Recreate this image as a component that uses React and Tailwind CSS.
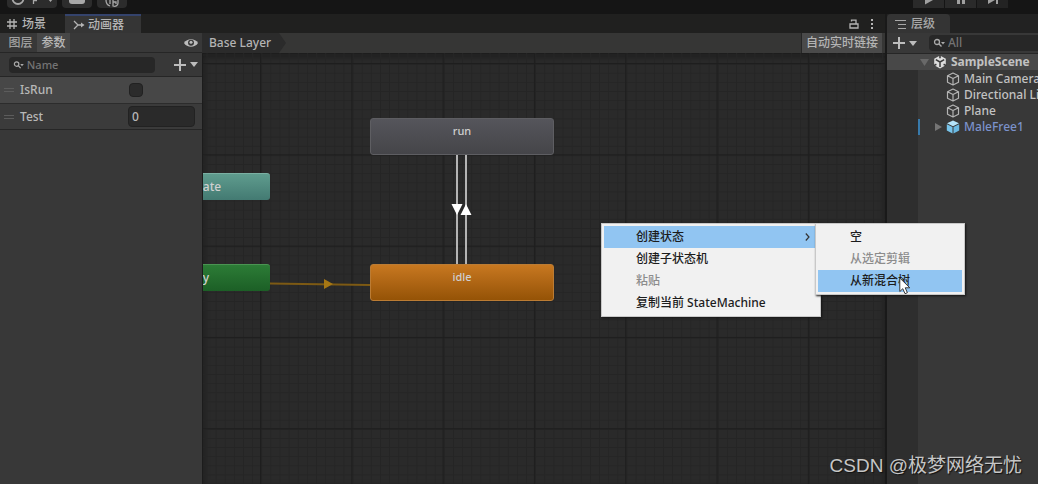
import { useState } from "react";

const MINOR = 9.13;
const MAJOR = 91.3;

const objects = [
  { name: "Main Camera" },
  { name: "Directional Light" },
  { name: "Plane" },
  { name: "MaleFree1", prefab: true },
];

function SearchIcon({ className }) {
  return (
    <svg viewBox="0 0 12 10" className={`h-[10px] w-3 ${className}`} fill="none" stroke="currentColor">
      <circle cx="4" cy="4" r="2.5" strokeWidth="1.3" />
      <path d="M6 6l2.5 2.5" strokeWidth="1.4" />
      <path d="M8 4h4L10 6.5z" fill="currentColor" stroke="none" />
    </svg>
  );
}

function AddButton({ label }) {
  return (
    <button aria-label={label} className="flex items-center gap-1 text-[#bdbdbd]">
      <svg viewBox="0 0 12 12" className="size-3" stroke="currentColor" strokeWidth="2">
        <path d="M6 0v12M0 6h12" />
      </svg>
      <svg viewBox="0 0 8 5" className="h-[5px] w-2" fill="currentColor">
        <path d="M0 0h8L4 5z" />
      </svg>
    </button>
  );
}

function CubeIcon({ filled }) {
  if (filled) {
    return (
      <svg viewBox="0 0 14 14" className="size-[14px] shrink-0">
        <path d="M7 .5l6 2.8L7 6.2 1 3.3z" fill="#b4e4fa" />
        <path d="M.8 4.2l5.7 2.7v6.6L.8 10.6z" fill="#78c4ea" />
        <path d="M13.2 4.2L7.5 6.900v6.600l5.700-2.900z" fill="#6ab9e2" />
      </svg>
    );
  }
  return (
    <svg viewBox="0 0 14 14" className="size-[14px] shrink-0" fill="none" stroke="#b4b4b4" strokeWidth="1.2" strokeLinejoin="round">
      <path d="M7 1l5.500 2.700v6.600L7 13l-5.500-2.700V3.700zM1.500 3.700L7 6.500l5.500-2.800M7 6.500V13" />
    </svg>
  );
}

function UnityIcon() {
  return (
    <svg viewBox="0 0 14 14" className="size-[14px] shrink-0">
      <path d="M7 .5l5.800 3.200v6.600L7 13.500l-5.800-3.200V3.700z" fill="#dedede" />
      <path d="M7 7V12M7 7L2.800 4.600M7 7l4.200-2.400" stroke="#3c3c3c" strokeWidth="1.500" />
      <path d="M7 0v3.200M.8 10.600l2.600-1.400M13.200 10.600l-2.600-1.400" stroke="#3c3c3c" strokeWidth="1.600" />
    </svg>
  );
}

function TopToolbar() {
  return (
    <div className="flex h-[14px] items-start justify-between overflow-hidden bg-[#151515] pr-[30px] pl-[7px]">
      <div className="flex gap-[5px] text-[#a8a8a8]">
        <button aria-label="Account" className="flex h-2 w-[50px] items-start rounded-b-sm bg-[#2c2c2c] pl-1">
          <svg viewBox="0 0 46 8" className="h-2 w-[46px]" fill="none" stroke="currentColor">
            <path d="M1.500 -1.500a5 5 0 0 0 11 0" strokeWidth="1.800" />
            <path d="M22.500 0v4M22 .5h4" strokeWidth="1.300" />
            <path d="M37 -1h5L39.500 2z" fill="currentColor" stroke="none" />
          </svg>
        </button>
        <button aria-label="Cloud" className="flex h-2 w-[30px] items-start justify-center rounded-b-sm bg-[#2c2c2c]">
          <svg viewBox="0 0 16 4" className="h-1 w-4" fill="currentColor">
            <path d="M0 0h16v1a3 3 0 0 1-3 3H3a3 3 0 0 1-3-3z" />
          </svg>
        </button>
        <button aria-label="Services" className="flex h-2 w-[30px] items-start justify-center rounded-b-sm bg-[#2c2c2c]">
          <svg viewBox="0 0 14 8" className="h-2 w-[14px]" fill="none" stroke="currentColor" strokeWidth="1.300">
            <path d="M1 0c0 3 1 5 4 6M5 0v4M8 0v6c3 1 5-1 5-3V0M8 2h3v2" />
          </svg>
        </button>
      </div>
      <div className="flex gap-px text-[#a0a0a0]">
        <button aria-label="Play" className="flex h-2 w-[31px] justify-center bg-[#2a2a2a]">
          <svg viewBox="0 0 10 8" className="h-2 w-[10px]" fill="currentColor"><path d="M1-2v6.500L9 0V-2z" /></svg>
        </button>
        <button aria-label="Pause" className="flex h-2 w-[31px] justify-center bg-[#2a2a2a]">
          <svg viewBox="0 0 10 8" className="h-2 w-[10px]" fill="currentColor"><path d="M1 0h3v4H1zM6 0h3v4H6z" /></svg>
        </button>
        <button aria-label="Step" className="flex h-2 w-[31px] justify-center bg-[#232323]">
          <svg viewBox="0 0 12 8" className="h-2 w-3" fill="currentColor"><path d="M1 0v4l7-4zM9 0h2v4H9z" /></svg>
        </button>
      </div>
    </div>
  );
}

function AnimatorTabs() {
  return (
    <div className="flex h-[19px] items-stretch justify-between bg-[#20201f] text-[#b4b4b4]">
      <div className="flex">
        <button className="flex w-[65px] items-center gap-[5px] pt-px pl-[7px]">
          <svg viewBox="0 0 10 10" className="size-[10px]" stroke="currentColor" strokeWidth="1.300">
            <path d="M3 0v10M7 0v10M0 3h10M0 7h10" />
          </svg>
          场景
        </button>
        <button className="flex w-[76px] items-center gap-[3px] border-t-2 border-[#34436c] bg-[#353535] pl-2">
          <svg viewBox="0 0 12 10" className="h-[10px] w-3" fill="none" stroke="currentColor" strokeWidth="1.300">
            <path d="M1 1l4 4-4 4M5 5h5" />
            <path d="M8 2.500L11.500 5 8 7.500z" fill="currentColor" stroke="none" />
          </svg>
          动画器
        </button>
      </div>
      <div className="flex items-center gap-3 pr-3">
        <button aria-label="Lock">
          <svg viewBox="0 0 10 10" className="size-[10px]" fill="none" stroke="currentColor" strokeWidth="1.300">
            <path d="M1 5h8v4H1zM2.500 2.500V1.200h4.500V5" />
          </svg>
        </button>
        <button aria-label="Options">
          <svg viewBox="0 0 2 10" className="h-[10px] w-[2px]" fill="currentColor">
            <path d="M0 0h2v2H0zM0 4h2v2H0zM0 8h2v2H0z" />
          </svg>
        </button>
      </div>
    </div>
  );
}

function DragHandle() {
  return (
    <svg viewBox="0 0 10 4" className="mr-[6px] h-1 w-[10px]" stroke="#5c5c5c">
      <path d="M0 .5h10M0 3.500h10" />
    </svg>
  );
}

function Parameters() {
  const [isRun, setIsRun] = useState(false);
  const [test, setTest] = useState("0");

  return (
    <aside className="w-[202px] shrink-0 bg-[#383838] text-[#b8b8b8]">
      <div className="flex h-5 items-stretch border-b border-[#262626] pr-1 pl-1">
        <button className="w-[33px] text-center text-[#a0a0a0]">图层</button>
        <button className="w-[33px] bg-[#474747] text-center">参数</button>
        <button aria-label="Visibility" className="ml-auto">
          <svg viewBox="0 0 14 10" className="h-[10px] w-[14px]">
            <path d="M0 5C3 0 11 0 14 5C11 10 3 10 0 5z" fill="#bcbcbc" />
            <circle cx="7" cy="4.800" r="3" fill="#383838" />
            <circle cx="7" cy="4.300" r="1.500" fill="#bcbcbc" />
          </svg>
        </button>
      </div>
      <div className="flex h-[23px] items-center justify-between pr-1 pl-[9px]">
        <label className="flex h-4 w-[146px] items-center rounded-sm bg-[#272727] pl-1">
          <SearchIcon className="mr-[3px] text-[#aaaaaa]" />
          <input
            aria-label="Search parameters"
            placeholder="Name"
            className="w-full min-w-0 bg-transparent text-[11px] outline-none placeholder:text-[#747474]"
          />
        </label>
        <AddButton label="Add parameter" />
      </div>
      <div className="border-y border-[#262626]">
        <div className="flex h-[26px] items-center bg-[#474747] pl-1">
          <DragHandle />
          <label htmlFor="is-run" className="w-[109px]">IsRun</label>
          <input
            id="is-run"
            type="checkbox"
            checked={isRun}
            onChange={(e) => setIsRun(e.target.checked)}
            className="size-[14px] appearance-none rounded-sm border border-[#212121] bg-[#2b2b2b] checked:bg-[#888888]"
          />
        </div>
        <div className="flex h-[26px] items-center border-t border-[#2c2c2c] bg-[#3b3b3b] pl-1">
          <DragHandle />
          <label htmlFor="test" className="w-[108px]">Test</label>
          <input
            id="test"
            value={test}
            onChange={(e) => setTest(e.target.value)}
            className="h-[21px] w-[67px] rounded-sm border border-[#222222] bg-[#2a2a2a] pl-[3px] outline-none"
          />
        </div>
      </div>
    </aside>
  );
}

function Grid() {
  return (
    <svg className="absolute inset-0 size-full">
      <defs>
        <pattern id="minor" x="3.500" y="1.500" width={MINOR} height={MINOR} patternUnits="userSpaceOnUse">
          <path d={`M0 .5H${MINOR}M.5 0V${MINOR}`} stroke="#252525" />
        </pattern>
        <pattern id="major" x="57" y="10" width={MAJOR} height={MAJOR} patternUnits="userSpaceOnUse">
          <path d={`M0 .5H${MAJOR}M.5 0V${MAJOR}`} stroke="#1e1e1e" strokeWidth="1.500" />
        </pattern>
      </defs>
      <rect width="100%" height="100%" fill="url(#minor)" />
      <rect width="100%" height="100%" fill="url(#major)" />
    </svg>
  );
}

function Graph() {
  return (
    <div className="relative flex-1 overflow-hidden border-l border-[#1c1c1c] bg-[#2a2a2a] text-center text-[#d0d0d0] shadow-[inset_0_3px_6px_#1a1a1a]">
      <Grid />
      {/* Transitions */}
      <svg className="absolute inset-0 size-full">
        <path d="M67 230.500L167 232" stroke="#7d5a14" strokeWidth="2" />
        <path d="M121 226v10l9-5z" fill="#a67714" />
        <path d="M254 100V212M263 100V212" stroke="#b4b4b4" strokeWidth="2" />
        <path d="M248.500 151h11L254 162zM257.500 162h11L263 151z" fill="#ffffff" />
      </svg>
      {/* States */}
      <div className="absolute top-[120px] left-[-85px] h-[27px] w-[152px] rounded-[3px] border-t border-[#7bb0a3] bg-linear-to-b from-[#5f9c8e] to-[#437a72] pt-[5px]">
        Any State
      </div>
      <div className="absolute top-[211px] left-[-85px] h-[27px] w-[152px] rounded-[3px] border-t border-[#4a9452] bg-linear-to-b from-[#2c7c36] to-[#1c5f26] pt-[5px]">
        Entry
      </div>
      <div className="absolute top-[65px] left-[167px] h-[37px] w-[184px] rounded-[3px] border border-[#5e5e62] bg-linear-to-b from-[#55555b] to-[#454549] pt-1 text-[11px] leading-4">
        run
      </div>
      <div className="absolute top-[211px] left-[167px] h-[37px] w-[184px] rounded-[3px] border border-[#bb7c34] bg-linear-to-b from-[#c87820] to-[#955306] pt-1 text-[11px] leading-4">
        idle
      </div>
    </div>
  );
}

function Hierarchy() {
  return (
    <section className="flex w-[153px] shrink-0 flex-col overflow-hidden border-l-2 border-[#191919] bg-[#383838] text-[#c2c2c2]">
      <div className="flex h-[19px] bg-[#222222]">
        <button className="flex w-[63px] items-center gap-[5px] rounded-t-sm bg-[#343434] pt-px pl-2 text-[#a8a8a8]">
          <svg viewBox="0 0 11 9" className="h-[9px] w-[11px]" stroke="currentColor">
            <path d="M0 .5h11M3 4.500h8M3 8.500h8M.5 0v1" />
          </svg>
          层级
        </button>
      </div>
      <div className="flex h-[21px] items-center gap-3 border-b border-[#262626] pl-[6px]">
        <AddButton label="Create object" />
        <label className="flex h-4 flex-1 items-center rounded-l-sm bg-[#272727] pl-1">
          <SearchIcon className="mr-[3px] shrink-0 text-[#aaaaaa]" />
          <input
            aria-label="Search hierarchy"
            placeholder="All"
            className="w-full min-w-0 bg-transparent outline-none placeholder:text-[#747474]"
          />
        </label>
      </div>
      <button className="flex h-4 shrink-0 items-center bg-[#484848] pl-[33px] font-bold whitespace-nowrap">
        <svg viewBox="0 0 9 7" className="mr-1 h-[7px] w-[9px] shrink-0" fill="#696969"><path d="M0 0h9L4.500 7z" /></svg>
        <UnityIcon />
        <span className="ml-1">SampleScene</span>
      </button>
      <div className="flex flex-1">
        <div className="w-[31px] shrink-0 bg-[#2e2e2e]" />
        <ul className="flex-1 pt-px">
          {objects.map((obj) => (
            <li key={obj.name}>
              <button
                className={
                  obj.prefab
                    ? "flex h-4 items-center border-l-2 border-[#387aab] pl-[15px] whitespace-nowrap text-[#7b92cb]"
                    : "flex h-4 items-center pl-7 whitespace-nowrap"
                }
              >
                {obj.prefab && (
                  <svg viewBox="0 0 7 8" className="mr-1 h-2 w-[7px]" fill="#757575"><path d="M0 0v8l7-4z" /></svg>
                )}
                <CubeIcon filled={obj.prefab} />
                <span className="ml-1">{obj.name}</span>
              </button>
            </li>
          ))}
        </ul>
      </div>
    </section>
  );
}

function ContextMenu() {
  return (
    <div className="absolute top-[223px] left-[601px] w-[220px] border border-[#c8c8c8] bg-[#f1f1f1] p-[2px] text-[#1c1c1c] shadow-[1px_1px_2px_#151515]">
      <button className="flex h-[22px] w-full items-center justify-between bg-[#91c5f2] pr-2 pl-8">
        创建状态
        <svg viewBox="0 0 5 8" className="h-2 w-[5px]" fill="none" stroke="#333333" strokeWidth="1.200">
          <path d="M.8.500L4 4 .8 7.500" />
        </svg>
      </button>
      <button className="block h-[22px] w-full pl-8 text-left">创建子状态机</button>
      <button disabled className="block h-[22px] w-full pl-8 text-left text-[#8c8c8c]">粘贴</button>
      <button className="block h-[22px] w-full pl-8 text-left">复制当前 StateMachine</button>

      {/* Submenu */}
      <div className="absolute -top-px left-[213px] w-[150px] border border-[#c8c8c8] bg-[#f1f1f1] p-[2px] shadow-[1px_1px_2px_#151515]">
        <button className="block h-[22px] w-full pl-8 text-left">空</button>
        <button disabled className="block h-[22px] w-full pl-8 text-left text-[#8c8c8c]">从选定剪辑</button>
        <button className="block h-[22px] w-full bg-[#91c5f2] pl-8 text-left">从新混合树</button>
      </div>
    </div>
  );
}

export default function App() {
  return (
    <div className="relative flex h-screen flex-col overflow-hidden bg-[#191919] font-['Noto_Sans','Noto_Sans_CJK_SC',sans-serif] text-[12px] leading-4 font-medium">
      <TopToolbar />
      <div className="flex min-h-0 flex-1">
        <section className="flex min-w-0 flex-1 flex-col">
          <AnimatorTabs />
          <div className="flex min-h-0 flex-1">
            <Parameters />
            <div className="flex min-w-0 flex-1 flex-col">
              <div className="flex h-5 items-stretch justify-between bg-[#363635] pr-[3px] text-[#b4b4b4]">
                <div className="flex">
                  <button className="bg-[#2b2b2b] pr-2 pl-[7px]">Base Layer</button>
                  <svg viewBox="0 0 7 20" className="h-5 w-[7px]" fill="#2b2b2b"><path d="M0 0l7 10-7 10z" /></svg>
                </div>
                <button className="border-l border-[#262626] bg-[#4a4a4a] px-1">自动实时链接</button>
              </div>
              <Graph />
            </div>
          </div>
        </section>
        <Hierarchy />
      </div>

      <ContextMenu />
      {/* Mouse pointer */}
      <svg viewBox="0 0 12 18" className="absolute top-[277px] left-[899px] h-[18px] w-3">
        <path d="M.8 1v13.500l3-2.800 2.200 5 2.400-1-2.200-4.900h4.600z" fill="#ffffff" stroke="#3a3a3a" />
      </svg>
      <p className="absolute right-4 bottom-[6px] font-['Liberation_Sans','Noto_Sans_CJK_SC',sans-serif] text-[19px] leading-6 font-normal text-[#c6c6c6] [text-shadow:1px_1px_1px_#111111]">
        CSDN @极梦网络无忧
      </p>
    </div>
  );
}
